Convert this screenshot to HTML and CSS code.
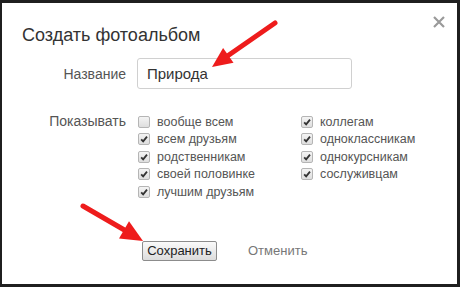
FILE: index.html
```html
<!DOCTYPE html>
<html lang="ru">
<head>
  <meta charset="UTF-8" />
  <title>Создать фотоальбом</title>
  <link rel="stylesheet" href="styles.css">
</head>
<body>

<!-- Dialog -->
<div class="dialog">
  <h2 class="title">Создать фотоальбом</h2>
  <svg class="close" width="12" height="12" viewBox="0 0 12 12">
    <path d="M1 1 L11 11 M11 1 L1 11" stroke="#9a9a9a" stroke-width="2.2" />
  </svg>

  <div class="form">
    <label class="lbl">Название</label>
    <div class="field"><input class="name" value="Природа" /></div>

    <label class="lbl lbl-top">Показывать</label>
    <div class="opts">
      <div class="opt"><span class="cb"></span>вообще всем</div>
      <div class="opt"><span class="cb on"><svg viewBox="0 0 12 12"><path d="M2.6 6.4 L5 8.8 L9.6 3.2" /></svg></span>всем друзьям</div>
      <div class="opt"><span class="cb on"><svg viewBox="0 0 12 12"><path d="M2.6 6.4 L5 8.8 L9.6 3.2" /></svg></span>родственникам</div>
      <div class="opt"><span class="cb on"><svg viewBox="0 0 12 12"><path d="M2.6 6.4 L5 8.8 L9.6 3.2" /></svg></span>своей половинке</div>
      <div class="opt"><span class="cb on"><svg viewBox="0 0 12 12"><path d="M2.6 6.4 L5 8.8 L9.6 3.2" /></svg></span>лучшим друзьям</div>
      <div class="opt"><span class="cb on"><svg viewBox="0 0 12 12"><path d="M2.6 6.4 L5 8.8 L9.6 3.2" /></svg></span>коллегам</div>
      <div class="opt"><span class="cb on"><svg viewBox="0 0 12 12"><path d="M2.6 6.4 L5 8.8 L9.6 3.2" /></svg></span>одноклассникам</div>
      <div class="opt"><span class="cb on"><svg viewBox="0 0 12 12"><path d="M2.6 6.4 L5 8.8 L9.6 3.2" /></svg></span>однокурсникам</div>
      <div class="opt"><span class="cb on"><svg viewBox="0 0 12 12"><path d="M2.6 6.4 L5 8.8 L9.6 3.2" /></svg></span>сослуживцам</div>
    </div>
  </div>

  <div class="actions">
    <button class="save">Сохранить</button>
    <a class="cancel">Отменить</a>
  </div>

  <!-- red pointer arrows over the dialog -->
  <svg class="arrows" width="455" height="281" viewBox="0 0 455 281">
    <g transform="translate(-2,-3)">
      <line x1="275" y1="23" x2="226" y2="57" stroke="#ee1c1c" stroke-width="5" stroke-linecap="round" />
      <polygon points="212,67 233.5,62.7 223.1,48.1" fill="#ee1c1c" />
      <line x1="83" y1="206" x2="127" y2="231.5" stroke="#ee1c1c" stroke-width="5" stroke-linecap="round" />
      <polygon points="143,241 119,238.5 129,221.3" fill="#ee1c1c" />
    </g>
  </svg>
</div>

</body>
</html>
```

FILE: styles.css
```css
/* page behind the dialog */
body {
  margin: 0;
  height: 287px;
  overflow: hidden;
  background: #1f1f1f;
  font-family: "Liberation Sans", Arial, sans-serif;
  color: #333;
}

.dialog {
  position: relative;
  margin: 3px 3px 3px 2px;
  height: 281px;
  background: #fff;
}

.title {
  margin: 0;
  padding: 21px 0 0 20px;
  font-size: 18px;
  line-height: 22px;
  font-weight: normal;
  color: #333;
}

.close {
  position: absolute;
  top: 13px;
  right: 12px;
}

/* form grid */
.form {
  display: grid;
  grid-template-columns: 124px auto;
  column-gap: 11px;
  margin-top: 12px;
}

.lbl {
  text-align: right;
  font-size: 14px;
  color: #555;
  align-self: center;
}

.lbl-top {
  align-self: start;
  margin-top: 24px;
  line-height: 17.5px;
}

.name {
  box-sizing: border-box;
  width: 215px;
  height: 31px;
  padding: 0 9px;
  border: 1px solid #d0d0d0;
  border-radius: 3px;
  font-family: inherit;
  font-size: 15px;
  color: #333;
  outline: none;
}

.opts {
  display: grid;
  grid-template-columns: 163px auto;
  grid-template-rows: repeat(5, 17.5px);
  grid-auto-flow: column;
  margin-top: 24px;
}

.opt {
  display: flex;
  align-items: center;
  gap: 7px;
  font-size: 12.5px;
  color: #555;
  padding-left: 1px;
}

.cb {
  box-sizing: border-box;
  width: 12px;
  height: 12px;
  border: 1px solid #b5b5b5;
  border-radius: 2px;
  background: linear-gradient(#f4f4f4, #dedede);
  display: flex;
}

.cb svg {
  width: 10px;
  height: 10px;
}

.cb path {
  fill: none;
  stroke: #333;
  stroke-width: 2.2;
}

/* buttons */
.actions {
  display: flex;
  align-items: center;
  gap: 31px;
  margin: 40px 0 0 140px;
}

.save {
  width: 75px;
  height: 20px;
  padding: 0;
  border: 1px solid #8c8c8c;
  border-radius: 2px;
  background: linear-gradient(#fafafa, #dcdcdc);
  font-family: inherit;
  font-size: 13px;
  color: #222;
}

.cancel {
  font-size: 13px;
  color: #777;
}

.arrows {
  position: absolute;
  top: 0;
  left: 0;
  pointer-events: none;
}
```
